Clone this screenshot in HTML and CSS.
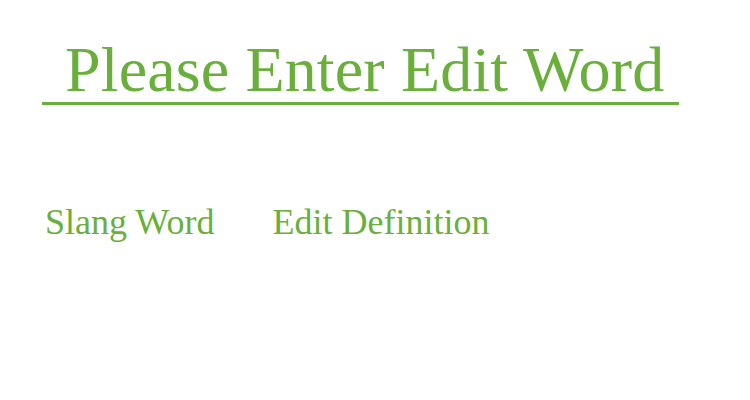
FILE: index.html
```html
<!DOCTYPE html>
<html lang="en">
<head>
<meta charset="utf-8">
<title>Edit Word</title>
<link rel="stylesheet" href="styles.css">
</head>
<body>
  <h1 class="title">Please Enter Edit Word</h1>
  <div class="fields">
    <span class="label">Slang Word</span>
    <span class="label">Edit Definition</span>
  </div>
</body>
</html>
```

FILE: styles.css
```css
html, body {
  background: #ffffff;
}
body {
  margin: 8px;
  font-family: "Liberation Serif", "Times New Roman", serif;
  color: #6aaf3b;
}
.title {
  display: inline-block;
  margin: 30px 0 0 34px;
  padding: 0 15px 0 23px;
  font-size: 64px;
  line-height: 64px;
  letter-spacing: 0.14px;
  font-weight: normal;
  border-bottom: 3px solid #6aaf3b;
}
.fields {
  display: flex;
  gap: 58px;
  margin: 97px 0 0 37px;
  font-size: 36px;
  line-height: 40px;
}
```
